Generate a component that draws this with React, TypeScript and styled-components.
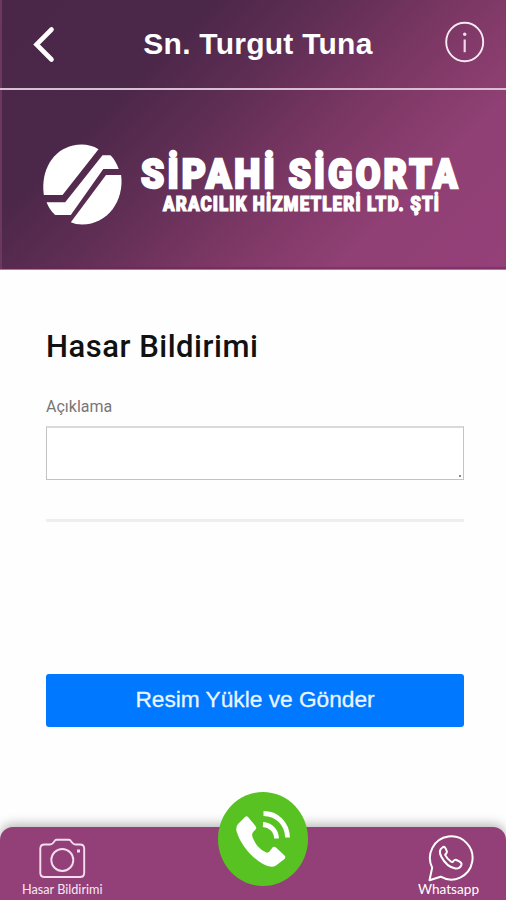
import React from "react";
import styled, { createGlobalStyle } from "styled-components";

const GlobalStyle = createGlobalStyle`
  * { box-sizing: border-box; }
  body { margin: 0; background: #fefefe; }
`;

const Screen = styled.div`
  width: 506px;
  height: 900px;
  display: flex;
  flex-direction: column;
  overflow: hidden;
  background: #fefefe;
  font-family: Roboto, sans-serif;
`;

const Header = styled.header`
  height: 270px;
  flex: none;
  display: flex;
  flex-direction: column;
  background: linear-gradient(135deg, #4a2648 0%, #4b2749 27%, #602e54 43%, #7b3764 60%, #904074 78%, #944079 100%);
  border-bottom: 1px solid #a878a0;
  box-shadow: inset 2px 0 0 #6d3860, inset 0 -2px 1px rgba(112, 30, 90, 0.45);
`;

const TopBar = styled.div`
  height: 90px;
  flex: none;
  display: flex;
  align-items: flex-start;
  justify-content: space-between;
  padding: 20px 20px 0 30px;
  border-bottom: 2px solid #d9bfd4;
`;

const IconButton = styled.button`
  display: block;
  padding: 0;
  border: 0;
  background: none;
  color: #fff;
  line-height: 0;
`;

const Title = styled.h1`
  margin: 5px 0 0 14px;
  color: #fff;
  font: 700 30px/38px "Liberation Sans", sans-serif;
  letter-spacing: 0.25px;
  white-space: nowrap;
`;

const Brand = styled.div`
  flex: 1;
  svg { display: block; }
`;

const Content = styled.main`
  flex: 1;
  display: flex;
  flex-direction: column;
  padding: 57px 42px 0 46px;
`;

const Heading = styled.h2`
  margin: 0;
  color: #111;
  font-size: 31px;
  line-height: 40px;
  font-weight: 500;
  letter-spacing: 0.52px;
`;

const Label = styled.label`
  margin-top: 30px;
  color: #777;
  font-size: 16px;
  line-height: 20px;
`;

const Field = styled.div`
  height: 54px;
  margin-top: 9px;
  display: flex;
  align-items: flex-end;
  justify-content: flex-end;
  padding: 2px;
  border: 1px solid #c3c3c3;
  border-top: 2px solid #d9d9d9;
  background: #fff;
`;

const Grip = styled.span`
  width: 2px;
  height: 2px;
  background: #888;
`;

const Divider = styled.hr`
  width: 100%;
  height: 3px;
  margin: 39px 0 0;
  border: 0;
  background: #eee;
`;

const Submit = styled.button`
  height: 53px;
  margin-top: 152px;
  padding: 0 0 3px;
  border: 0;
  border-radius: 3px;
  background: #0078ff;
  color: #e9f5ff;
  font: 400 22.7px/30px "Liberation Sans", sans-serif;
  -webkit-text-stroke: 0.3px #e9f5ff;
`;

const BottomBar = styled.nav`
  position: relative;
  flex: none;
  height: 73px;
  display: flex;
  justify-content: space-between;
  padding: 8px 26px 0 21px;
  border-radius: 13px 13px 0 0;
  background: #934078;
  box-shadow: 0 -3px 11px rgba(0, 0, 0, 0.28);
`;

const NavItem = styled.a`
  display: flex;
  flex-direction: column;
  align-items: center;
  color: #f6e8f3;
  svg { display: block; }
`;

const CallButton = styled.button`
  position: absolute;
  left: 218px;
  top: -35px;
  width: 90px;
  height: 94px;
  padding: 0;
  border: 0;
  border-radius: 50%;
  background: #59c223;
  svg { display: block; }
`;

const BackIcon = () => (
  <svg width="28" height="50" viewBox="0 0 28 50" fill="none">
    <path d="M21.5 9.500 6.500 24.500l15 15" stroke="#fff" strokeWidth="4.600" strokeLinecap="round" />
  </svg>
);

const InfoIcon = () => (
  <svg width="42" height="44" viewBox="0 0 42 44" fill="none">
    <ellipse cx="20.7" cy="22" rx="18.5" ry="19.2" stroke="#f9e9f5" strokeWidth="1.9" />
    <circle cx="20.7" cy="14.3" r="1.7" fill="#f2dbee" />
    <path d="M20.7 19.5v12.7" stroke="#f0d8ec" strokeWidth="2.2" />
  </svg>
);

const BrandLogo = () => (
  <svg width="506" height="178" viewBox="0 90 506 178">
    <g fill="#fff">
      <path d="M98.500 149.200C91 144.500 82 143.500 73 145.500C53 150 40.500 170 43.800 195H62.500Z" />
      <path d="M102.500 155.200H110.500Q115.500 160 118.700 169H103.300L70.800 215H55.200Q49.500 210 46.600 202.200H65.200Z" />
      <path d="M106 175H121.100C124.500 200 108 224.500 82 224.500Q75.500 224.500 70.800 222.300Z" />
    </g>
    <g fill="#fff" stroke="#fff" fontFamily="Roboto, sans-serif" fontWeight="900">
      <text x="141" y="187.500" fontSize="40" strokeWidth="2.4" letterSpacing="3.500" textLength="137" lengthAdjust="spacingAndGlyphs">SİPAHİ</text>
      <text x="288.500" y="187.500" fontSize="40" strokeWidth="2.4" letterSpacing="3.500" textLength="172" lengthAdjust="spacingAndGlyphs">SİGORTA</text>
      <text x="163" y="211" fontSize="20" strokeWidth="1.2" letterSpacing="1.3" textLength="277" lengthAdjust="spacingAndGlyphs">ARACILIK HİZMETLERİ LTD. ŞTİ</text>
    </g>
  </svg>
);

const CameraItem = () => (
  <svg width="84" height="65" viewBox="0 0 84 65" fill="none" stroke="#f5ddf0" strokeWidth="1.9">
    <path d="M23.500 9.500H29Q31 9.500 32.500 7.500L34 5.500Q34.500 4.700 36 4.700H47.500Q49 4.700 49.500 5.500L51 7.500Q52.500 9.500 54.500 9.500H59Q63.200 9.500 63.200 13.700V38Q63.200 42 59 42H23.500Q19.300 42 19.300 38V13.700Q19.300 9.500 23.500 9.500Z" strokeLinejoin="round" />
    <circle cx="41.300" cy="25" r="11" />
    <rect x="56" y="14.500" width="3" height="3" fill="#f5ddf0" stroke="none" />
    <text x="1" y="59" fill="#f6e8f3" stroke="none" fontFamily="Lato, sans-serif" fontSize="12.500" textLength="80.500" lengthAdjust="spacingAndGlyphs">Hasar Bildirimi</text>
  </svg>
);

const WhatsappItem = () => (
  <svg width="62" height="65" viewBox="0 0 62 65" fill="none" stroke="#fff" strokeWidth="2" strokeLinecap="round" strokeLinejoin="round">
    <path d="M11.500 45.200 14.200 32.600A21.300 21.600 0 1 1 22.700 41.700Z" />
    <path d="M24.500 12.500c-3 1.800-3.300 5-1.300 9 3.200 6.200 8.200 10.900 14.200 12 3 .3 5-1 6-3.700.5-1.500-.3-2.300-1.700-3.100l-3.300-1.700c-1.500-.7-2.200.1-3.300 1.500-.6.700-1.400.6-2.200 0-2.500-1.700-4.500-4-5.800-6.600.6-1 2-1.900 1.800-3.300-.4-1.500-1.200-3.400-2-4.300-.7-.6-1.600-.5-2.400.2Z" />
    <text x="0" y="58.500" fill="#fff" stroke="none" fontFamily="Lato, sans-serif" fontSize="12.700" textLength="61" lengthAdjust="spacingAndGlyphs">Whatsapp</text>
  </svg>
);

const PhoneIcon = () => (
  <svg width="90" height="94" viewBox="0 0 90 94" fill="none">
    <path d="M27 25Q28.500 23.500 30 25L37.500 34Q39 36 37.500 37.500L35.200 40Q33.500 42 34.500 45C37 52 42 58 48.500 60.500Q50 61 51.500 59.500L54.500 55.500Q56 54 58 55.500L67 64Q67.800 65.300 66.500 67L58 73.500Q53 76.500 45 72C32 64.500 22 51 18.600 39.500Q17.500 35 20 32Z" fill="#fff" />
    <path d="M45.500 21.500C59 21.500 69 31.500 69.600 45.500" stroke="#fff" strokeWidth="4.800" />
    <path d="M45 32.500C52.500 33 58.500 38.500 58.500 46.500" stroke="#fff" strokeWidth="4.800" />
  </svg>
);

export default function App() {
  return (
    <>
      <GlobalStyle />
      <Screen>
        <Header>
          <TopBar>
            <IconButton aria-label="Geri"><BackIcon /></IconButton>
            <Title>Sn. Turgut Tuna</Title>
            <IconButton aria-label="Bilgi"><InfoIcon /></IconButton>
          </TopBar>
          <Brand><BrandLogo /></Brand>
        </Header>
        <Content>
          <Heading>Hasar Bildirimi</Heading>
          <Label>Açıklama</Label>
          <Field><Grip /></Field>
          <Divider />
          <Submit>Resim Yükle ve Gönder</Submit>
        </Content>
        <BottomBar>
          <NavItem><CameraItem /></NavItem>
          <CallButton aria-label="Ara"><PhoneIcon /></CallButton>
          <NavItem><WhatsappItem /></NavItem>
        </BottomBar>
      </Screen>
    </>
  );
}
